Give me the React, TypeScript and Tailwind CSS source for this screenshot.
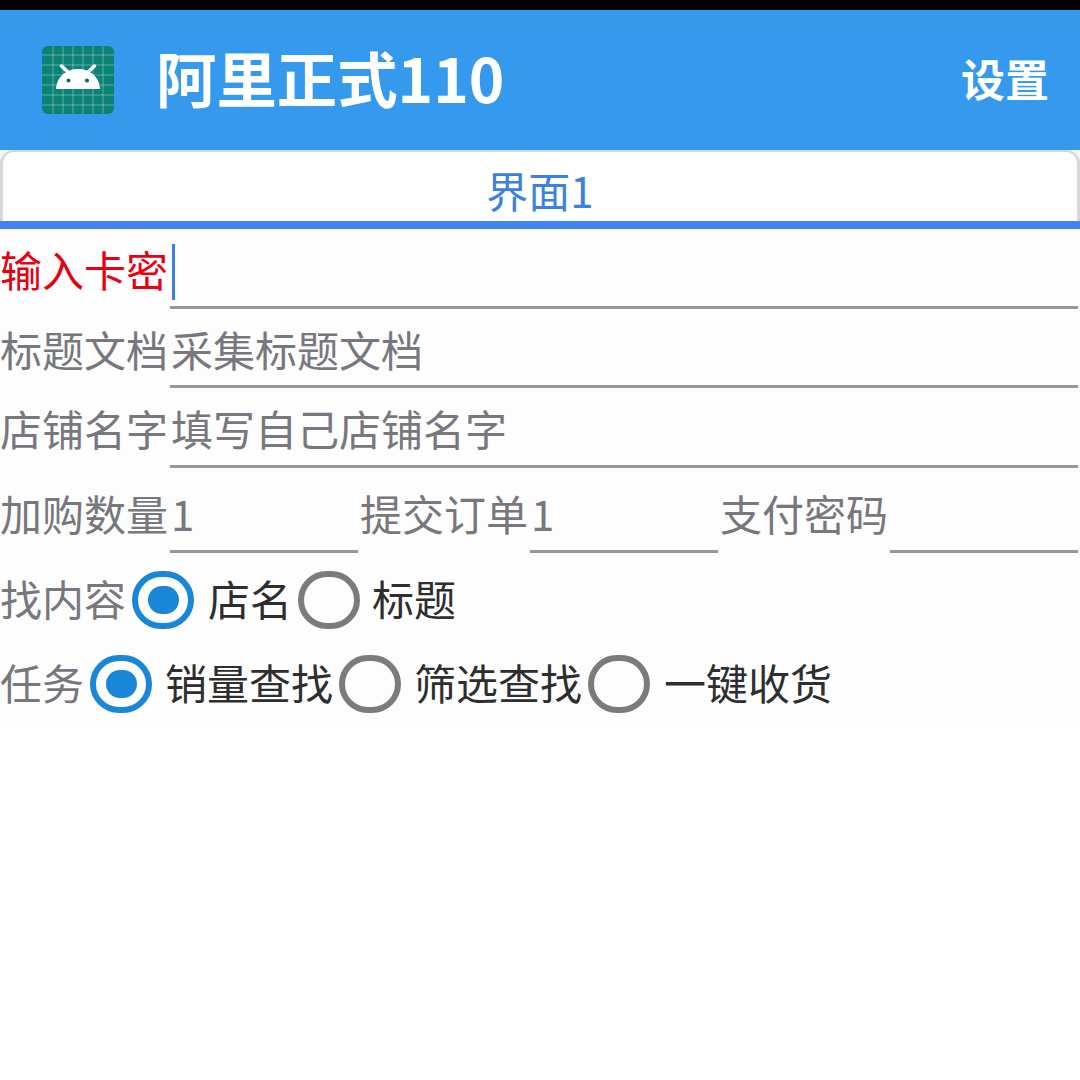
import React from 'react';

const font = { fontFamily: '"Noto Sans CJK SC", "Noto Sans", sans-serif' };

const AndroidIcon = () => (
  <div className="relative w-[72px] h-[68px] rounded-[6px] bg-[#0a8276] overflow-hidden">
    <svg width="72" height="68" viewBox="0 0 72 68" className="absolute inset-0">
      {[11, 21, 31, 41, 51, 61].map((v) => (
        <line key={'v' + v} x1={v} y1="0" x2={v} y2="68" stroke="#ffffff" strokeOpacity="0.35" strokeWidth="1" />
      ))}
      {[9, 19, 29, 39, 49, 59].map((v) => (
        <line key={'h' + v} x1="0" y1={v} x2="72" y2={v} stroke="#ffffff" strokeOpacity="0.35" strokeWidth="1" />
      ))}
      <path d="M14 43 C14.5 31 24 23 36 23 C48 23 57.5 31 58 43 Z" fill="#ffffff" />
      <path d="M27 27 L19.5 20 M45 27 L52.5 20" stroke="#ffffff" strokeWidth="3.5" strokeLinecap="round" />
      <circle cx="26.5" cy="34.5" r="2" fill="#0a6b61" />
      <circle cx="45" cy="34.5" r="2" fill="#0a6b61" />
    </svg>
  </div>
);

const Radio = ({ checked }: { checked?: boolean }) => (
  <span
    className={
      checked
        ? 'shrink-0 flex items-center justify-center w-[62px] h-[58px] rounded-full border-[6px] border-[#1a86d8]'
        : 'shrink-0 w-[62px] h-[58px] rounded-full border-[6px] border-[#7b7b7b]'
    }
  >
    {checked && <span className="w-[31px] h-[28px] rounded-full bg-[#1a86d8]" />}
  </span>
);

const FieldRow = ({ label, hint, red, cursor, className }: { label: string; hint?: string; red?: boolean; cursor?: boolean; className: string }) => (
  <div className={`flex ${className}`}>
    <span className={`shrink-0 w-[170px] text-[42px] leading-[80px] whitespace-nowrap ${red ? 'text-[#e60012]' : 'text-[#77777d]'}`}>
      {label}
    </span>
    <div className="flex-1 mr-[2px] border-b-[3px] border-[#98989c] pl-px text-[42px] leading-[80px] text-[#77777d] whitespace-nowrap flex items-start">
      {cursor && <span className="ml-px mt-[15px] w-[3px] h-[56px] bg-[#3a80e0]" />}
      {hint}
    </div>
  </div>
);

const CountCell = ({ label, value, lineWidth }: { label: string; value?: string; lineWidth: string }) => (
  <div className="flex h-[85px]">
    <span className="shrink-0 w-[170px] text-[42px] leading-[90px] text-[#77777d] whitespace-nowrap">{label}</span>
    <div className={`${lineWidth} border-b-[3px] border-[#98989c] pl-px text-[42px] leading-[90px] text-[#77777d]`}>{value}</div>
  </div>
);

const Label = ({ children, className }: { children: React.ReactNode; className: string }) => (
  <span className={`shrink-0 mb-[6px] text-[42px] whitespace-nowrap ${className}`}>{children}</span>
);

export default function App() {
  return (
    <div className="w-[1080px] h-[1080px] bg-white overflow-hidden" style={font}>
      <div className="h-[10px] bg-black" />
      <header className="h-[140px] bg-[#359aee] flex items-center pl-[42px] pr-[31px]">
        <AndroidIcon />
        <h1 className="ml-[42px] mb-[6px] text-[60.4px] font-bold text-white leading-none">阿里正式110</h1>
        <span className="ml-auto mb-[4px] text-[44px] font-bold text-white leading-none">设置</span>
      </header>
      <div className="h-[71px] bg-[#f4f6f8]">
        <div className="h-full bg-white border-t-2 border-x-[3px] border-[#d8d8d8] rounded-t-[14px] text-center text-[42px] leading-[76px] text-[#3b82e0]">界面1</div>
      </div>
      <div className="h-[8px] bg-[#3f84f2]" />
      <main className="h-[497px] bg-[#fdfdfd]">
        <FieldRow label="输入卡密" red cursor className="h-[80px]" />
        <FieldRow label="标题文档" hint="采集标题文档" className="h-[79px]" />
        <FieldRow label="店铺名字" hint="填写自己店铺名字" className="h-[80px]" />
        <div className="flex">
          <CountCell label="加购数量" value="1" lineWidth="w-[188px]" />
          <div className="w-[2px]" />
          <CountCell label="提交订单" value="1" lineWidth="w-[188px]" />
          <div className="w-[2px]" />
          <CountCell label="支付密码" lineWidth="w-[188px]" />
        </div>
        <div className="flex items-center h-[84px] mt-[5px]">
          <Label className="w-[132px] text-[#77777d]">找内容</Label>
          <Radio checked />
          <Label className="ml-[14px] w-[90px] text-[#2e2e2e]">店名</Label>
          <Radio />
          <Label className="ml-[12px] text-[#2e2e2e]">标题</Label>
        </div>
        <div className="flex items-center h-[84px]">
          <Label className="w-[90px] text-[#77777d]">任务</Label>
          <Radio checked />
          <Label className="ml-[13px] w-[174px] text-[#2e2e2e]">销量查找</Label>
          <Radio />
          <Label className="ml-[13px] w-[174px] text-[#2e2e2e]">筛选查找</Label>
          <Radio />
          <Label className="ml-[14px] text-[#2e2e2e]">一键收货</Label>
        </div>
      </main>
    </div>
  );
}
